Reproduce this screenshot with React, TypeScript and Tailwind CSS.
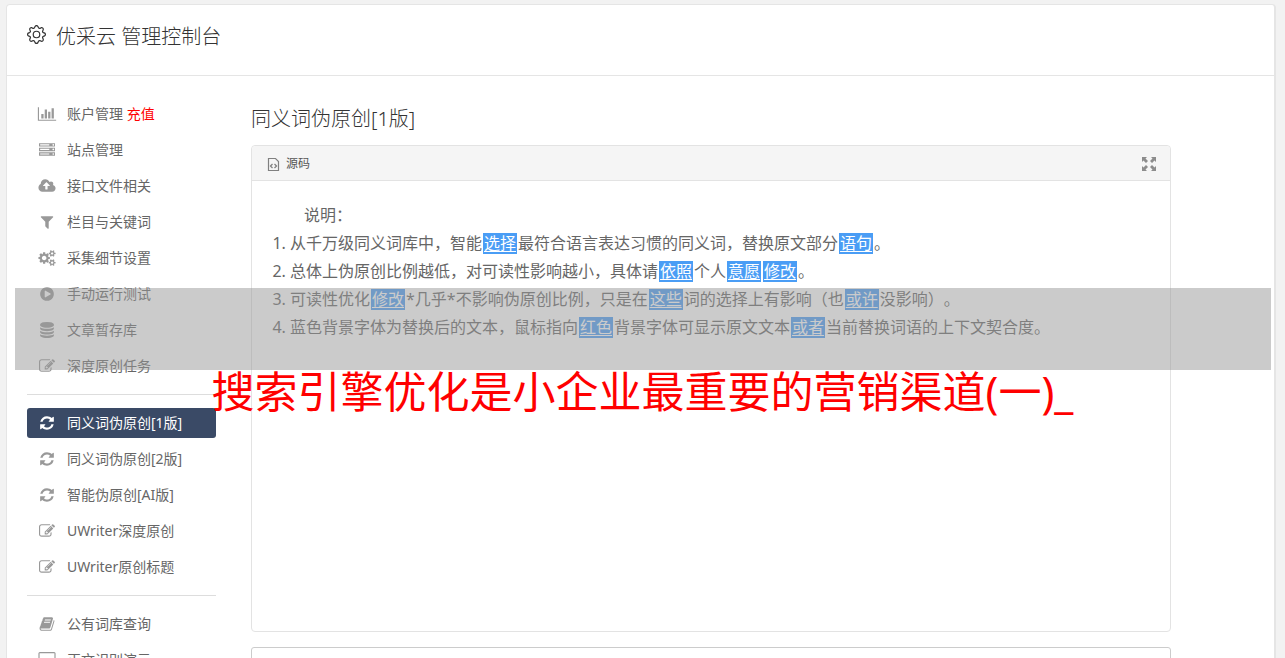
import type { ReactNode } from 'react'
import clsx from 'clsx'
import { BsGear } from 'react-icons/bs'

const ICONS = {
  chart: {
    viewBox: '0 0 2048 1792',
    d: 'M640 896v512h-256v-512h256zm384-512v1024h-256v-1024h256zm1024 1152v128h-2048v-1536h128v1408h1920zm-640-896v768h-256v-768h256zm384-384v1152h-256v-1152h256z',
  },
  server: {
    viewBox: '0 0 1792 1792',
    d: 'M128 1408h1024v-128h-1024v128zm0-512h1024v-128h-1024v128zm1568 448q0-40-28-68t-68-28-68 28-28 68 28 68 68 28 68-28 28-68zm-1568-960h1024v-128h-1024v128zm1568 448q0-40-28-68t-68-28-68 28-28 68 28 68 68 28 68-28 28-68zm0-512q0-40-28-68t-68-28-68 28-28 68 28 68 68 28 68-28 28-68zm96 832v384h-1792v-384h1792zm0-512v384h-1792v-384h1792zm0-512v384h-1792v-384h1792z',
  },
  cloud: {
    viewBox: '0 0 1920 1792',
    d: 'M1280 864q0-14-9-23l-352-352q-9-9-23-9t-23 9l-351 351q-10 12-10 24 0 14 9 23t23 9h224v352q0 13 9.500 22.500t22.500 9.500h192q13 0 22.500-9.500t9.500-22.500v-352h224q13 0 22.500-9.500t9.500-22.500zm640 288q0 159-112.500 271.500t-271.500 112.500h-1088q-185 0-316.500-131.500t-131.500-316.500q0-130 70-240t188-165q-2-30-2-43 0-212 150-362t362-150q156 0 285.500 87t188.500 231q71-62 166-62 106 0 181 75t75 181q0 76-41 138 130 31 213.500 135.500t83.500 238.500z',
  },
  filter: {
    viewBox: '0 0 1792 1792',
    d: 'M1595 295q17 41-14 70l-493 493v742q0 42-39 59-13 5-25 5-27 0-45-19l-256-256q-19-19-19-45v-486l-493-493q-31-29-14-70 17-39 59-39h1280q42 0 59 39z',
  },
  cogs: {
    viewBox: '0 0 1920 1792',
    d: 'M896 896q0-106-75-181t-181-75-181 75-75 181 75 181 181 75 181-75 75-181zm768 512q0-52-38-90t-90-38-90 38-38 90q0 53 37.500 90.500t90.500 37.500 90.500-37.500 37.500-90.500zm0-1024q0-52-38-90t-90-38-90 38-38 90q0 53 37.500 90.500t90.500 37.500 90.500-37.500 37.500-90.500zm-384 421v185q0 10-7 19.500t-16 10.500l-155 24q-11 35-32 76 34 48 90 115 7 11 7 20 0 12-7 19-23 30-82.500 89.500t-78.500 59.500q-11 0-21-7l-115-90q-37 19-77 31-11 108-23 155-7 24-30 24h-186q-11 0-20-7.500t-10-17.500l-23-153q-34-10-75-31l-118 89q-7 7-20 7-11 0-21-8-144-133-144-160 0-9 7-19 10-14 41-53t47-61q-23-44-35-82l-152-24q-10-1-17-9.500t-7-19.500v-185q0-10 7-19.500t16-10.500l155-24q11-35 32-76-34-48-90-115-7-11-7-20 0-12 7-20 22-30 82-89t79-59q11 0 21 7l115 90q34-18 77-32 11-108 23-154 7-24 30-24h186q11 0 20 7.500t10 17.500l23 153q34 10 75 31l118-89q8-7 20-7 11 0 21 8 144 133 144 160 0 8-7 19-12 16-42 54t-45 60q23 48 34 82l152 23q10 2 17 10.500t7 19.500zm640 533v140q0 16-149 31-12 27-30 52 51 113 51 138 0 4-4 7-122 71-124 71-8 0-46-47t-52-68q-20 2-30 2t-30-2q-14 21-52 68t-46 47q-2 0-124-71-4-3-4-7 0-25 51-138-18-25-30-52-149-15-149-31v-140q0-16 149-31 13-29 30-52-51-113-51-138 0-4 4-7 4-2 35-20t59-34 30-16q8 0 46 46.500t52 67.500q20-2 30-2t30 2q51-71 92-112l6-2q4 0 124 70 4 3 4 7 0 25-51 138 17 23 30 52 149 15 149 31zm0-1024v140q0 16-149 31-12 27-30 52 51 113 51 138 0 4-4 7-122 71-124 71-8 0-46-47t-52-68q-20 2-30 2t-30-2q-14 21-52 68t-46 47q-2 0-124-71-4-3-4-7 0-25 51-138-18-25-30-52-149-15-149-31v-140q0-16 149-31 13-29 30-52-51-113-51-138 0-4 4-7 4-2 35-20t59-34 30-16q8 0 46 46.500t52 67.500q20-2 30-2t30 2q51-71 92-112l6-2q4 0 124 70 4 3 4 7 0 25-51 138 17 23 30 52 149 15 149 31z',
  },
  play: {
    viewBox: '0 0 1792 1792',
    d: 'M896 128q209 0 385.500 103t279.500 279.500 103 385.500-103 385.500-279.500 279.500-385.500 103-385.500-103-279.500-279.500-103-385.500 103-385.500 279.500-279.500 385.500-103zm384 823q32-18 32-55t-32-55l-544-320q-31-19-64-1-32 19-32 56v640q0 37 32 56 16 8 32 8 17 0 32-9z',
  },
  database: {
    viewBox: '0 0 1792 1792',
    d: 'M896 768q237 0 443-43t325-127v170q0 69-103 128t-280 93.500-385 34.500-385-34.500-280-93.500-103-128v-170q119 84 325 127t443 43zm0 768q237 0 443-43t325-127v170q0 69-103 128t-280 93.500-385 34.500-385-34.500-280-93.500-103-128v-170q119 84 325 127t443 43zm0-384q237 0 443-43t325-127v170q0 69-103 128t-280 93.500-385 34.500-385-34.500-280-93.500-103-128v-170q119 84 325 127t443 43zm0-1152q208 0 385 34.500t280 93.500 103 128v128q0 69-103 128t-280 93.500-385 34.500-385-34.500-280-93.500-103-128v-128q0-69 103-128t280-93.500 385-34.500z',
  },
  edit: {
    viewBox: '0 0 1792 1792',
    d: 'M888 1184l116-116-152-152-116 116v56h96v96h56zm440-720q-16-16-33 1l-350 350q-17 17-1 33t33-1l350-350q17-17 1-33zm80 594v190q0 119-84.500 203.500t-203.500 84.500h-832q-119 0-203.500-84.500t-84.500-203.500v-832q0-119 84.500-203.500t203.500-84.500h832q63 0 117 25 15 7 18 23 3 17-9 29l-49 49q-14 14-32 8-23-6-45-6h-832q-66 0-113 47t-47 113v832q0 66 47 113t113 47h832q66 0 113-47t47-113v-126q0-13 9-22l64-64q15-15 35-7t20 29zm-96-738l288 288-672 672h-288v-288zm444 132l-92 92-288-288 92-92q28-28 68-28t68 28l152 152q28 28 28 68t-28 68z',
  },
  refresh: {
    viewBox: '0 0 1792 1792',
    d: 'M1639 1056q0 5-1 7-64 268-268 434.500t-478 166.500q-146 0-282.500-55t-243.500-157l-129 129q-19 19-45 19t-45-19-19-45v-448q0-26 19-45t45-19h448q26 0 45 19t19 45-19 45l-137 137q71 66 161 102t187 36q134 0 250-65t186-179q11-17 53-117 8-23 30-23h192q13 0 22.500 9.500t9.500 22.500zm25-800v448q0 26-19 45t-45 19h-448q-26 0-45-19t-19-45 19-45l138-138q-148-137-349-137-134 0-250 65t-186 179q-11 17-53 117-8 23-30 23h-199q-13 0-22.500-9.500t-9.500-22.500v-7q65-268 270-434.500t480-166.500q146 0 284 55.500t245 156.500l130-129q19-19 45-19t45 19 19 45z',
  },
  book: {
    viewBox: '0 0 1792 1792',
    d: 'M1703 478q40 57 18 129l-275 906q-19 64-76.500 107.500t-122.500 43.500h-923q-77 0-148.500-53.500t-99.500-131.500q-24-67-2-127 0-4 3-27t4-37q1-8-3-21.500t-3-19.500q2-11 8-21t16.500-23.500 16.500-23.500q23-38 45-91.500t30-91.500q3-10 .5-30t-.5-28q3-11 17-28t17-23q21-36 42-92t25-90q1-9-2.500-32t.5-28q4-13 22-30.500t22-22.500q19-26 42.500-84.500t27.500-96.500q1-8-3-25.500t-2-26.500q2-8 9-18t18-23 17-21q8-12 16.500-30.500t15-35 16-36 19.500-32 26.500-23.500 36-11.500 47.500 5.500l-1 3q38-9 51-9h761q74 0 114 56t18 130l-274 906q-36 119-71.500 153.500t-128.500 34.500h-869q-27 0-38 15-11 16-1 43 24 70 144 70h923q29 0 56-15.500t35-41.500l300-987q7-22 5-57 38 15 59 43zm-1064 2q-4 13 2 22.500t20 9.500h608q13 0 25.500-9.500t16.500-22.500l21-64q4-13-2-22.500t-20-9.500h-608q-13 0-25.500 9.500t-16.500 22.500zm-83 256q-4 13 2 22.500t20 9.500h608q13 0 25.500-9.500t16.500-22.500l21-64q4-13-2-22.500t-20-9.500h-608q-13 0-25.500 9.500t-16.500 22.500z',
  },
  desktop: {
    viewBox: '0 0 1920 1792',
    d: 'M1792 992v-832q0-13-9.500-22.500t-22.500-9.500h-1600q-13 0-22.500 9.500t-9.500 22.500v832q0 13 9.500 22.500t22.500 9.500h1600q13 0 22.500-9.500t9.500-22.500zm128-832v1088q0 66-47 113t-113 47h-544q0 37 16 77.500t32 71 16 43.500q0 26-19 45t-45 19h-512q-26 0-45-19t-19-45q0-14 16-44t32-70 16-78h-544q-66 0-113-47t-47-113v-1088q0-66 47-113t113-47h1600q66 0 113 47t47 113z',
  },
}

type IconName = keyof typeof ICONS

interface MenuItem {
  icon: IconName
  label: string
  extra?: string
  active?: boolean
}

const MENU: MenuItem[][] = [
  [
    { icon: 'chart', label: '账户管理', extra: '充值' },
    { icon: 'server', label: '站点管理' },
    { icon: 'cloud', label: '接口文件相关' },
    { icon: 'filter', label: '栏目与关键词' },
    { icon: 'cogs', label: '采集细节设置' },
    { icon: 'play', label: '手动运行测试' },
    { icon: 'database', label: '文章暂存库' },
    { icon: 'edit', label: '深度原创任务' },
  ],
  [
    { icon: 'refresh', label: '同义词伪原创[1版]', active: true },
    { icon: 'refresh', label: '同义词伪原创[2版]' },
    { icon: 'refresh', label: '智能伪原创[AI版]' },
    { icon: 'edit', label: 'UWriter深度原创' },
    { icon: 'edit', label: 'UWriter原创标题' },
  ],
  [
    { icon: 'book', label: '公有词库查询' },
    { icon: 'desktop', label: '正文识别演示' },
  ],
]

function Icon({ name }: { name: IconName }) {
  const { viewBox, d } = ICONS[name]

  return (
    <svg viewBox={viewBox} className="h-4 w-5 shrink-0" fill="currentColor">
      <path d={d} />
    </svg>
  )
}

function Sidebar() {
  return (
    <nav className="w-[189px] shrink-0 divide-y divide-[#dddddd] text-sm">
      {MENU.map((group, index) => (
        <ul
          key={index}
          className="flex flex-col gap-1.5 py-[13px] first:pt-0"
        >
          {group.map(({ icon, label, extra, active }) => (
            <li key={label}>
              <a
                href="#"
                className={clsx(
                  'flex h-[30px] items-center gap-2.5 rounded-[3px] pl-2.5 whitespace-nowrap',
                  active ? 'bg-[#3a4a66] text-white' : 'text-[#999999]',
                )}
              >
                <Icon name={icon} />
                <span className={active ? 'text-white' : 'text-[#666666]'}>
                  {label}
                  {extra && <span className="text-[#ff0000]"> {extra}</span>}
                </span>
              </a>
            </li>
          ))}
        </ul>
      ))}
    </nav>
  )
}

function Word({ children }: { children: ReactNode }) {
  return (
    <a
      href="#"
      className="mx-px inline-block bg-[#4a9df5] px-px leading-[21px] text-white underline underline-offset-2"
    >
      {children}
    </a>
  )
}

function Editor() {
  return (
    <div className="flex h-[487px] flex-col rounded border border-[#e3e3e3]">
      <div className="flex h-[35px] shrink-0 items-center justify-between rounded-t border-b border-[#e3e3e3] bg-[#f5f5f5] px-3.5 pt-0.5 text-xs text-[#555555]">
        <button type="button" className="flex items-center gap-1.5">
          <svg viewBox="0 0 14 16" className="h-4 w-3.5" fill="none">
            <path
              d="M2.500 2.500h7l3 3v9h-10z"
              stroke="#808080"
              strokeWidth="1.200"
            />
            <path
              d="M6.500 8l-2 2 2 2M8.500 8l2 2-2 2"
              stroke="#808080"
              strokeWidth="1.300"
            />
          </svg>
          源码
        </button>

        <button type="button" aria-label="全屏">
          <svg viewBox="0 0 14 14" className="size-3.5" fill="#8c8c8c">
            <path d="M0 0h5L3.500 1.500 6 4 4 6 1.500 3.500 0 5zM14 0v5l-1.500-1.500L10 6 8 4l2.500-2.500L9 0zM0 14V9l1.500 1.500L4 8l2 2-2.500 2.500L5 14zM14 14H9l1.500-1.500L8 10l2-2 2.500 2.500L14 9z" />
          </svg>
        </button>
      </div>

      <div className="flex-1 px-5 py-5 text-base leading-7 text-[#666666]">
        <p className="indent-8">说明：</p>
        <ol className="list-decimal pl-[18px]">
          <li>
            从千万级同义词库中，智能<Word>选择</Word>
            最符合语言表达习惯的同义词，替换原文部分<Word>语句</Word>。
          </li>
          <li>
            总体上伪原创比例越低，对可读性影响越小，具体请<Word>依照</Word>
            个人<Word>意愿</Word>
            <Word>修改</Word>。
          </li>
          <li>
            可读性优化<Word>修改</Word>
            *几乎*不影响伪原创比例，只是在<Word>这些</Word>
            词的选择上有影响（也<Word>或许</Word>没影响）。
          </li>
          <li>
            蓝色背景字体为替换后的文本，鼠标指向<Word>红色</Word>
            背景字体可显示原文文本<Word>或者</Word>
            当前替换词语的上下文契合度。
          </li>
        </ol>
      </div>
    </div>
  )
}

export default function App() {
  return (
    <div className="relative h-screen overflow-hidden bg-[#f2f2f2] pt-1 pr-[9px] pl-1.5 font-['Noto_Sans','Noto_Sans_CJK_SC',sans-serif] [text-spacing-trim:space-all]">
      <div className="min-h-full rounded border border-r-2 border-[#e5e5e5] bg-white">
        <header className="flex h-[71px] items-start gap-2.5 border-b border-[#e5e5e5] px-5 pt-4 text-[#333333]">
          <BsGear className="mt-1 size-[19px]" />
          <h1 className="text-xl leading-[31px] font-light">
            优采云 管理控制台
          </h1>
        </header>

        <div className="flex gap-[35px] pt-[23px] pl-5">
          <Sidebar />

          <main className="min-w-0 flex-1 pr-[103px]">
            <h2 className="mb-[11px] pt-1 text-xl leading-[31px] font-light text-[#333333]">
              同义词伪原创[1版]
            </h2>
            <Editor />
            <textarea
              aria-label="内容"
              className="mt-[15px] block h-[120px] w-full resize-none rounded-[3px] border border-[#cccccc] bg-white"
            />
          </main>
        </div>
      </div>

      <div className="pointer-events-none absolute inset-x-0 top-72">
        <div className="mr-3.5 ml-[15px] h-[82px] bg-[#979797]/50" />
        <p className="text-center text-[43px] leading-[44px] whitespace-nowrap text-[#ff0000]">
          搜索引擎优化是小企业最重要的营销渠道(一)_
        </p>
      </div>
    </div>
  )
}
